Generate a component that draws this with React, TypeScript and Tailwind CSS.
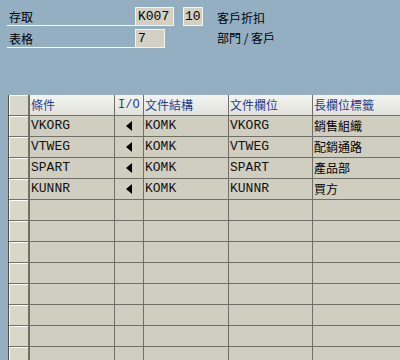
const rows = [
  { cond: "VKORG", struct: "KOMK", field: "VKORG", label: "銷售組織" },
  { cond: "VTWEG", struct: "KOMK", field: "VTWEG", label: "配銷通路" },
  { cond: "SPART", struct: "KOMK", field: "SPART", label: "產品部" },
  { cond: "KUNNR", struct: "KOMK", field: "KUNNR", label: "買方" },
];

const emptyRows = 9;

const cjk = "font-['Noto_Sans_CJK_TC','Noto_Sans_CJK_SC',sans-serif]";
const mono = "font-['Liberation_Mono',monospace]";

function Field({ label, value, boxWidth }: { label: string; value: string; boxWidth: string }) {
  return (
    <div className="flex items-end">
      <div className={`w-[128px] border-b border-white pl-[2px] text-[12px] leading-[17px] text-black ${cjk}`}>
        {label}
      </div>
      <div
        className={`${boxWidth} h-[19px] border border-[#f4f4f0] bg-[#d4d0c4] pl-[2px] text-[13px] leading-[17px] text-black ${mono}`}
      >
        {value}
      </div>
    </div>
  );
}

function Row({ cells, header }: { cells: React.ReactNode[]; header?: boolean }) {
  const widths = ["w-[85px]", "w-[29px]", "w-[85px]", "w-[84px]", "flex-1"];
  return (
    <div className="flex h-[21px] border-b border-[#707068]">
      <div
        className={`w-[19px] shrink-0 border-l border-t border-white ${
          header ? "bg-[#d8d8cc]" : "bg-[#d8d8c8]"
        }`}
      />
      <div className="w-[2px] shrink-0 bg-[#707068]" />
      {cells.map((c, i) => (
        <div
          key={i}
          className={`${widths[i]} shrink-0 overflow-hidden whitespace-nowrap ${
            i < 4 ? "border-r border-[#707068]" : ""
          } ${header ? "bg-gradient-to-b from-[#f4f4f0] to-[#e2e2dc]" : "bg-[#d0cec0]"}`}
        >
          {c}
        </div>
      ))}
    </div>
  );
}

export default function App() {
  const headCls = `pl-[1px] text-[12px] leading-[20px] text-[#1c3f94] ${cjk}`;
  const monoCls = `pl-[1px] text-[13px] leading-[20px] text-[#111] ${mono}`;
  const cjkCls = `pl-[1px] text-[12px] leading-[20px] text-black ${cjk}`;

  return (
    <div className="w-[400px] h-[360px] overflow-hidden bg-[#94afc2]">
      <div className="flex pl-[7px] pt-[7px]">
        <div className="flex flex-col gap-[3px]">
          <Field label="存取" value="K007" boxWidth="w-[39px]" />
          <Field label="表格" value="7" boxWidth="w-[30px]" />
        </div>
        <div className="flex flex-col">
          <div className="flex items-end h-[19px]">
            <div
              className={`ml-[9px] w-[20px] h-[19px] border border-[#f4f4f0] bg-[#d4d0c4] pl-[1px] text-[13px] leading-[17px] text-black ${mono}`}
            >
              10
            </div>
            <div className={`ml-[14px] text-[12px] leading-[17px] text-black ${cjk}`}>客戶折扣</div>
          </div>
          <div className={`ml-[43px] mt-[3px] text-[12px] leading-[17px] text-black ${cjk}`}>部門 / 客戶</div>
        </div>
      </div>

      <div className="mt-[47px] ml-[8px] border-l border-[#505048]">
        <Row
          header
          cells={[
            <div className={headCls}>條件</div>,
            <div className={`pl-[3px] text-[12px] leading-[20px] text-[#1c3f94] ${mono}`}>I/O</div>,
            <div className={headCls}>文件結構</div>,
            <div className={headCls}>文件欄位</div>,
            <div className={headCls}>長欄位標籤</div>,
          ]}
        />
        {rows.map((r) => (
          <Row
            key={r.cond}
            cells={[
              <div className={monoCls}>{r.cond}</div>,
              <div className="flex h-full items-center justify-center">
                <svg width="6" height="10" viewBox="0 0 6 10">
                  <path d="M6 0 L0 5 L6 10 Z" fill="#000" />
                </svg>
              </div>,
              <div className={monoCls}>{r.struct}</div>,
              <div className={monoCls}>{r.field}</div>,
              <div className={cjkCls}>{r.label}</div>,
            ]}
          />
        ))}
        {Array.from({ length: emptyRows }).map((_, i) => (
          <Row key={i} cells={[null, null, null, null, null]} />
        ))}
      </div>
    </div>
  );
}
